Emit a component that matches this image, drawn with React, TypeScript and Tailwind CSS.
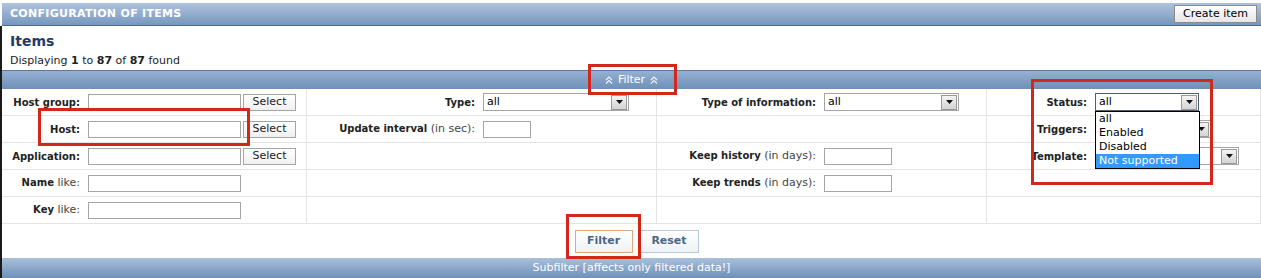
import type { ReactNode } from "react";

const FONT = { fontFamily: '"DejaVu Sans", Verdana, sans-serif' };

function TextInput({ w }: { w: string }) {
  return <div className={`h-[17px] ${w} border border-[#a5a5a5] bg-white`} />;
}

function SelectBtn() {
  return (
    <div className="ml-[2px] flex h-[17px] w-[53px] items-center justify-center border border-[#a5a5a5] bg-gradient-to-b from-white to-[#f0f0f0] text-[11px] text-[#222]">
      Select
    </div>
  );
}

function Dropdown({ w, value, focused = false }: { w: string; value?: string; focused?: boolean }) {
  return (
    <div
      className={`flex h-[18px] ${w} items-center justify-between border bg-white pl-[3px] text-[11px] text-black ${
        focused ? "border-[#4f5f73]" : "border-[#a5a5a5]"
      }`}
    >
      <span>{value}</span>
      <span className="mr-[1px] flex h-[15px] w-[16px] items-center justify-center border border-[#9a9a9a] bg-gradient-to-b from-[#f4f4f4] to-[#d4d4d4]">
        <svg width="7" height="4" viewBox="0 0 7 4">
          <path d="M0 0h7L3.5 4z" fill="#111" />
        </svg>
      </span>
    </div>
  );
}

function Label({ w, bold, rest }: { w: string; bold: string; rest?: string }) {
  return (
    <div className={`${w} shrink-0 pr-[8px] text-right text-[10px] text-[#333]`}>
      <b className="text-[#222]">{bold}</b>
      {rest && <span className="text-[11px] text-[#444]">{rest}</span>}
    </div>
  );
}

function Cell({ children }: { children?: ReactNode }) {
  return <div className="flex h-[27px] items-center border-b border-r border-[#e4e4e4]">{children}</div>;
}

function RedBox({ className }: { className: string }) {
  return <div className={`pointer-events-none absolute border-[3px] border-[#d3271c] ${className}`} />;
}

function Chevrons() {
  return (
    <svg width="8" height="8" viewBox="0 0 8 8" className="mx-[5px]">
      <path d="M1 4l3-3 3 3M1 7.5l3-3 3 3" fill="none" stroke="#eef3f9" strokeWidth="1.2" />
    </svg>
  );
}

export default function App() {
  const c1 = "w-[86px]";
  const c2 = "w-[176px]";
  const c3 = "w-[167px]";
  const c4 = "w-[108px]";

  return (
    <div className="relative h-[278px] w-[1261px] overflow-hidden bg-white" style={FONT}>
      <div className="pt-[3px]">
        <div className="ml-[2px] flex h-[23px] items-center justify-between border-b border-[#4b6b91] bg-gradient-to-b from-[#aec3dc] to-[#7797be] pl-[8px] pr-[4px]">
          <span className="text-[11px] font-bold tracking-[0.3px] text-white">CONFIGURATION OF ITEMS</span>
          <div className="flex h-[18px] items-center border border-[#8a8a8a] bg-gradient-to-b from-white to-[#e6e6e6] px-[8px] text-[11px] text-black">
            Create item
          </div>
        </div>

        <div className="border-l-[2px] border-[#1a1a1a]">
          <div className="h-[44px] pl-[8px] pt-[7px]">
            <div className="text-[14px] font-bold leading-[17px] text-[#1f3b68]">Items</div>
            <div className="mt-[3px] text-[11px] text-[#222]">
              Displaying <b>1</b> to <b>87</b> of <b>87</b> found
            </div>
          </div>

          <div className="flex h-[19px] items-center justify-center border-t border-[#5a7aa0] bg-gradient-to-b from-[#95b0d2] to-[#6f90b8] text-[11px] text-white">
            <Chevrons />
            Filter
            <Chevrons />
          </div>

          <div className="grid grid-cols-[305px_350px_330px_1fr]">
            <Cell>
              <Label w={c1} bold="Host group:" />
              <TextInput w="w-[153px]" />
              <SelectBtn />
            </Cell>
            <Cell>
              <Label w={c2} bold="Type:" />
              <Dropdown w="w-[146px]" value="all" />
            </Cell>
            <Cell>
              <Label w={c3} bold="Type of information:" />
              <Dropdown w="w-[135px]" value="all" />
            </Cell>
            <Cell>
              <Label w={c4} bold="Status:" />
              <Dropdown w="w-[104px]" value="all" focused />
            </Cell>

            <Cell>
              <Label w={c1} bold="Host:" />
              <TextInput w="w-[153px]" />
              <SelectBtn />
            </Cell>
            <Cell>
              <Label w={c2} bold="Update interval" rest=" (in sec):" />
              <TextInput w="w-[48px]" />
            </Cell>
            <Cell />
            <Cell>
              <Label w={c4} bold="Triggers:" />
              <Dropdown w="w-[116px]" />
            </Cell>

            <Cell>
              <Label w={c1} bold="Application:" />
              <TextInput w="w-[153px]" />
              <SelectBtn />
            </Cell>
            <Cell />
            <Cell>
              <Label w={c3} bold="Keep history" rest=" (in days):" />
              <TextInput w="w-[68px]" />
            </Cell>
            <Cell>
              <Label w={c4} bold="Template:" />
              <Dropdown w="w-[144px]" />
            </Cell>

            <Cell>
              <Label w={c1} bold="Name" rest=" like:" />
              <TextInput w="w-[153px]" />
            </Cell>
            <Cell />
            <Cell>
              <Label w={c3} bold="Keep trends" rest=" (in days):" />
              <TextInput w="w-[68px]" />
            </Cell>
            <Cell />

            <Cell>
              <Label w={c1} bold="Key" rest=" like:" />
              <TextInput w="w-[153px]" />
            </Cell>
            <Cell />
            <Cell />
            <Cell />
          </div>

          <div className="flex h-[34px] items-center justify-center gap-[7px] pl-[10px]">
            <div className="flex h-[23px] w-[58px] items-center justify-center border border-[#e0a77a] bg-gradient-to-b from-white to-[#eef2f6] text-[11px] font-bold text-[#4d6785]">
              Filter
            </div>
            <div className="flex h-[23px] w-[59px] items-center justify-center border border-[#b9c8d8] bg-gradient-to-b from-white to-[#eef2f6] text-[11px] font-bold text-[#4d6785]">
              Reset
            </div>
          </div>

          <div className="flex h-[20px] items-center justify-center bg-gradient-to-b from-[#a9c0da] to-[#6f90b9] text-[11px] text-white">
            Subfilter [affects only filtered data!]
          </div>
        </div>
      </div>

      <div className="absolute left-[1095px] top-[111px] w-[105px] border border-black bg-white text-[11px] leading-[14px] text-black">
        <div className="pl-[3px]">all</div>
        <div className="pl-[3px]">Enabled</div>
        <div className="pl-[3px]">Disabled</div>
        <div className="bg-[#3399ff] pl-[3px] text-white">Not supported</div>
      </div>

      <RedBox className="left-[588px] top-[64px] h-[31px] w-[89px]" />
      <RedBox className="left-[38px] top-[108px] h-[38px] w-[212px]" />
      <RedBox className="left-[1031px] top-[79px] h-[106px] w-[182px]" />
      <RedBox className="left-[566px] top-[214px] h-[45px] w-[75px]" />
    </div>
  );
}
